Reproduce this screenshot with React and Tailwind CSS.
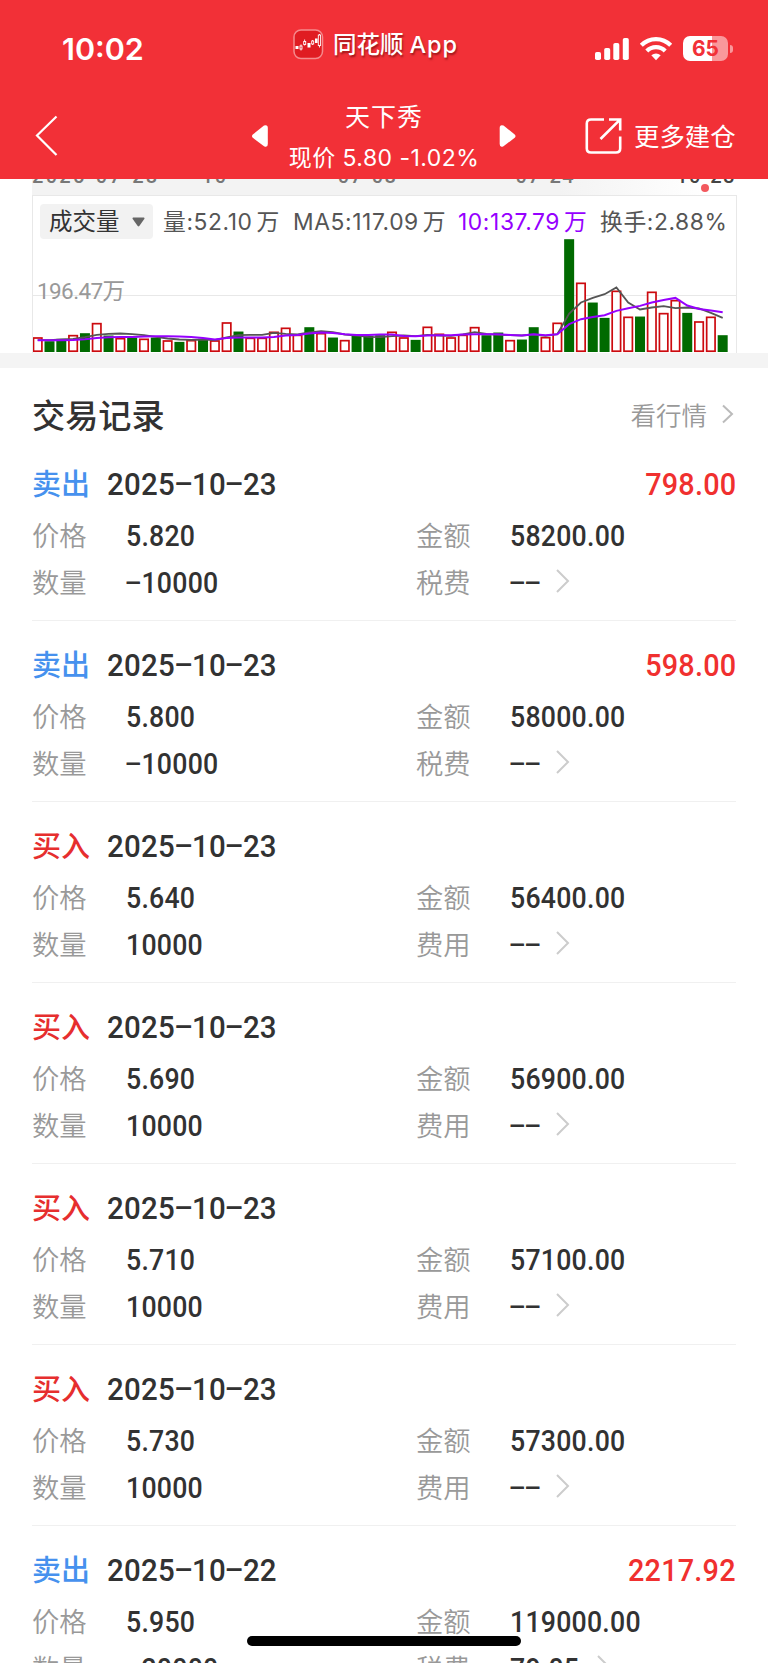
import React from "react";

const CJK = "font-['Noto_Sans_CJK_SC',sans-serif]";
const MIX = "font-['Inter','Noto_Sans_CJK_SC',sans-serif]";

const RED = "#cc0a0f";
const GREEN = "#006a00";

// [direction, top edge of the bar inside the volume pane, in thirds of a pixel]
const VOLUMES = [
  ["r", 516], ["g", 528], ["g", 521], ["r", 509], ["g", 504], ["r", 473], ["g", 511], ["r", 518], ["g", 517], ["r", 520],
  ["g", 517], ["r", 525], ["g", 530], ["r", 524], ["g", 521], ["r", 525], ["r", 471], ["g", 499], ["r", 517], ["r", 517],
  ["r", 499], ["r", 487], ["r", 508], ["g", 486], ["r", 503], ["g", 517], ["r", 524], ["g", 512], ["g", 512], ["g", 510],
  ["r", 499], ["r", 516], ["g", 524], ["r", 484], ["r", 505], ["r", 516], ["r", 508], ["r", 485], ["g", 510], ["g", 502],
  ["r", 524], ["g", 523], ["g", 486], ["r", 515], ["r", 472], ["g", 222], ["r", 352], ["g", 412], ["g", 458], ["r", 376],
  ["r", 454], ["g", 454], ["r", 379], ["r", 443], ["r", 404], ["g", 443], ["r", 468], ["r", 454], ["g", 510],
];

const MA5 = [
  525, 525, 523, 521, 516, 509, 506, 505, 507, 510, 515, 520, 523, 524, 523, 525, 517, 510, 509, 509,
  503, 506, 508, 502, 498, 501, 508, 511, 515, 516, 513, 511, 513, 509, 511, 512, 508, 501, 506, 509,
  510, 511, 508, 512, 507, 445, 412, 398, 387, 367, 412, 433, 427, 423, 429, 427, 430, 443, 458,
];

const MA10 = [
  525, 525, 525, 524, 522, 518, 516, 515, 515, 514, 513, 513, 514, 515, 518, 523, 518, 517, 517, 517,
  515, 511, 509, 505, 502, 503, 507, 509, 509, 508, 508, 512, 513, 511, 510, 510, 508, 507, 507, 507,
  509, 511, 507, 510, 507, 477, 462, 455, 450, 437, 429, 422, 412, 404, 398, 421, 431, 436, 441,
];

const xAt = (i) => 4.7 + i * 11.81;
const yAt = (v) => v / 3 - 30.8;
const toPoints = (arr) => arr.map((v, i) => `${xAt(i).toFixed(1)},${yAt(v).toFixed(1)}`).join(" ");

const RECORDS = [
  { side: "sell", date: "2025-10-23", profit: "798.00", price: "5.820", amount: "58200.00", qty: "-10000", fee: "--" },
  { side: "sell", date: "2025-10-23", profit: "598.00", price: "5.800", amount: "58000.00", qty: "-10000", fee: "--" },
  { side: "buy", date: "2025-10-23", price: "5.640", amount: "56400.00", qty: "10000", fee: "--" },
  { side: "buy", date: "2025-10-23", price: "5.690", amount: "56900.00", qty: "10000", fee: "--" },
  { side: "buy", date: "2025-10-23", price: "5.710", amount: "57100.00", qty: "10000", fee: "--" },
  { side: "buy", date: "2025-10-23", price: "5.730", amount: "57300.00", qty: "10000", fee: "--" },
  { side: "sell", date: "2025-10-22", profit: "2217.92", price: "5.950", amount: "119000.00", qty: "-20000", fee: "79.05" },
];

// Condensed digits; hyphens are stretched to the width of a digit.
function Num({ children, right }) {
  return (
    <span className={`inline-block whitespace-pre tracking-[0.250px] ${right ? "scale-x-[0.9] origin-right" : "scale-x-[0.92] origin-left"}`}>
      {children.split("").map((c, i) =>
        c === "-" ? (
          <span key={i} className="inline-block w-[0.58em] text-center tracking-normal">
            <span className="inline-block origin-center -translate-y-px scale-x-[1.950] scale-y-90">-</span>
          </span>
        ) : (
          c
        )
      )}
    </span>
  );
}

function StatusBar() {
  return (
    <div className="flex h-[94px] items-start">
      <div className="ml-[62px] mt-[31px] w-[231px] font-['Inter',sans-serif] text-[30.500px] leading-9 font-semibold">10:02</div>
      <div className="mt-[29px] flex w-[302px] items-center">
        <svg width="31" height="31" viewBox="0 0 31 31">
          <rect x="1" y="1" width="28.5" height="28.5" rx="7" fill="#e01c22" stroke="#f58a8d" strokeWidth="1.5" />
          <g fill="#fff">
            <rect x="2.5" y="17" width="3" height="3" />
            <rect x="14.5" y="14" width="3" height="4.5" />
            <rect x="22" y="9.5" width="2.6" height="4.5" />
          </g>
          <g fill="none" stroke="#fff" strokeWidth="0.9">
            <path d="M8 15.5v6M11.600 10.500v6M19.600 11v5M26.500 5v13.500" />
            <rect x="7" y="17" width="2" height="3" fill="#e01c22" />
            <rect x="10.700" y="12.500" width="2" height="3" fill="#e01c22" />
            <rect x="18.700" y="12" width="2" height="3" fill="#e01c22" />
            <rect x="25.300" y="6" width="2.300" height="10.500" fill="#e01c22" />
          </g>
        </svg>
        <span className={`${MIX} ml-[9px] text-[23.5px] leading-[31px] font-medium [text-shadow:1px_2px_2px_rgba(90,0,0,0.55)]`}>
          同花顺<span className="ml-[6px] tracking-[0.900px]">App</span>
        </span>
      </div>
      <div className="mt-[36px] flex items-start">
        <svg className="mt-[1px]" width="36" height="24" viewBox="0 0 36 24" fill="#fff">
          <rect x="0" y="15" width="6" height="8" rx="1.8" />
          <rect x="9.200" y="11" width="6" height="12" rx="1.8" />
          <rect x="18.300" y="6" width="6" height="17" rx="1.8" />
          <rect x="27.800" y="1" width="6" height="22" rx="1.8" />
        </svg>
        <svg className="ml-[8px]" width="34" height="25" viewBox="0 0 34 25" fill="none" stroke="#fff" strokeWidth="4.200">
          <path d="M2.300 9.300A20.500 20.500 0 0 1 31.700 9.300" />
          <path d="M7.800 15A12.800 12.800 0 0 1 26.200 15" />
          <path d="M17 24.300L12.300 19.200Q17 15.600 21.700 19.200Z" fill="#fff" stroke="none" />
        </svg>
        <div className="ml-[10px] flex items-center">
          <div className="flex h-[25px] w-[45px] items-center justify-center rounded-[7px] bg-[linear-gradient(to_right,#fff_65%,#f9989b_65%)] font-['Inter',sans-serif] text-[21px] leading-none font-bold text-[#f23037]">65</div>
          <div className="ml-[1.500px] h-[8px] w-[3px] rounded-r-full bg-[#f9989b]" />
        </div>
      </div>
    </div>
  );
}

function NavBar() {
  return (
    <div className="flex h-[85px] items-start">
      <svg className="ml-[35px] mt-[21px]" width="24" height="42" viewBox="0 0 24 42" fill="none" stroke="#fff" strokeWidth="2.200">
        <path d="M21.500 1.500L2 20.500L21.500 40" />
      </svg>
      <svg className="ml-[192px] mt-[30px]" width="18" height="24" viewBox="0 0 18 24" fill="#fff">
        <path d="M1.800 10.500L13 1.500Q16.800 0.200 16.800 4V20Q16.800 24 13 22.300L1.800 13.800Q0.200 12.200 1.800 10.500Z" />
      </svg>
      <div className={`${MIX} flex w-[230px] flex-col items-center`}>
        <div className="mt-[7px] text-[25px] leading-8 tracking-[1px]">天下秀</div>
        <div className="mt-[9px] text-[23px] leading-8 tracking-[0.450px] whitespace-nowrap">现价 5.80 -1.02%</div>
      </div>
      <svg className="mt-[30px]" width="18" height="24" viewBox="0 0 18 24" fill="#fff">
        <path d="M15.700 10.500L4.500 1.500Q0.700 0.200 0.700 4V20Q0.700 24 4.500 22.300L15.700 13.800Q17.300 12.200 15.700 10.500Z" />
      </svg>
      <svg className="ml-[67px] mt-[23px]" width="40" height="38" viewBox="0 0 40 38" fill="none" stroke="#fff" strokeWidth="2.600">
        <path d="M20 2.500H7Q2.800 2.500 2.800 6.500V31.500Q2.800 35.500 7 35.500H32Q36.200 35.500 36.200 31.500V19.500" />
        <path d="M25 2.500H36.200V13.500M36 2.700L16.500 22" />
      </svg>
      <span className={`${CJK} ml-[10px] mt-[23px] text-[25.400px] leading-9 whitespace-nowrap`}>更多建仓</span>
    </div>
  );
}

function VolumeChart() {
  return (
    <div className="h-[174px] shrink-0 px-8">
      <div className="flex h-[16px] w-[704px] overflow-hidden bg-[linear-gradient(to_right,#f3f3f3_75%,#ffffff_96%)] font-['Roboto',sans-serif] text-[20px] leading-[24px] font-medium text-[#777]">
        <div className="-mt-[15px] flex w-[704px] shrink-0 whitespace-pre tracking-[1.500px]">
          <span className="w-[134px] tracking-[2.300px]">2025-07-28</span>
          <span className="w-[172px] pl-[36px]">10</span>
          <span className="w-[178px]">07-08</span>
          <span className="w-[161px]">07-24</span>
          <span className="text-[#444]">10-23</span>
        </div>
      </div>
      <div className="relative h-[158px] w-[705px] border border-b-0 border-[#e8e8e8]">
        <svg className="absolute top-0 left-0" width="704" height="157" viewBox="0 0 704 157">
          <path d="M0 99.500H704" stroke="#e8e8e8" strokeWidth="1" />
          {VOLUMES.map(([d, v], i) => {
            const y = yAt(v);
            return d === "g" ? (
              <rect key={i} x={xAt(i) - 5} y={y} width="10" height={156 - y} fill={GREEN} />
            ) : (
              <rect key={i} x={xAt(i) - 4.2} y={y + 0.8} width="8.4" height={154.4 - y} fill="#fff" stroke={RED} strokeWidth="1.7" />
            );
          })}
          <polyline points={toPoints(MA5)} fill="none" stroke="#555" strokeWidth="1.8" />
          <polyline points={toPoints(MA10)} fill="none" stroke="#9600ff" strokeWidth="2" />
        </svg>
        <div className={`${MIX} relative flex items-center pt-[8px] pl-[7px] text-[22.800px] leading-[35px] tracking-[0.600px] text-[#555] whitespace-nowrap`}>
          <div className="flex h-[35px] w-[113px] items-center rounded-[4px] bg-[#f2f2f2] pl-[9px] text-[23.500px] tracking-normal text-[#333]">
            成交量
            <svg className="ml-[12px]" width="13" height="10" viewBox="0 0 13 10" fill="#666">
              <path d="M1 0.500H12Q13 1 12.300 2L7.300 9Q6.500 9.800 5.700 9L0.700 2Q0 1 1 0.500Z" />
            </svg>
          </div>
          <span className="ml-[10px] w-[130px]">量:52.10<span className="ml-[4px]">万</span></span>
          <span className="w-[165px]">MA5:117.09<span className="ml-[4px]">万</span></span>
          <span className="w-[142px] text-[#9600ff]">10:137.79<span className="ml-[4px]">万</span></span>
          <span>换手:2.88%</span>
        </div>
        <div className="relative mt-[36px] ml-[4px] font-['Roboto','Noto_Sans_CJK_SC',sans-serif] text-[22.500px] leading-8 tracking-[-0.600px] text-[#999]">196.47万</div>
        <div className="absolute -top-[12px] left-[668px] size-[8px] rounded-full bg-[#f3595e]" />
      </div>
    </div>
  );
}

function Chevron() {
  return (
    <svg className="ml-[12px] -mt-[3px]" width="14" height="24" viewBox="0 0 14 24" fill="none" stroke="#ccc" strokeWidth="2">
      <path d="M1 1L12 12L1 23" />
    </svg>
  );
}

function Field({ label, value, chevron, wide }) {
  return (
    <div className={wide ? "flex w-[384px] items-center" : "flex w-[320px] items-center"}>
      <span className={`${CJK} w-[94px] text-[27.300px] leading-[44px] font-[350] text-[#999] pb-[2px]`}>{label}</span>
      <span className="pt-[2px] font-['Roboto',sans-serif] text-[29px] leading-[44px] font-medium text-[#323232]">
        <Num>{value}</Num>
      </span>
      {chevron && <Chevron />}
    </div>
  );
}

function Record({ r }) {
  const sell = r.side === "sell";
  return (
    <div className="mx-8 h-[181px] shrink-0 border-b border-[#f0f0f0] pt-[25px]">
      <div className="flex h-9 items-center font-['Roboto',sans-serif] text-[32px] font-medium">
        <span className={`${CJK} w-[75px] text-[29px] ${sell ? "text-[#4691ee]" : "text-[#e62e2e]"}`}>
          {sell ? "卖出" : "买入"}
        </span>
        <span className="flex-1 pt-[2px] text-[#323232]"><Num>{r.date}</Num></span>
        {r.profit && <span className="pt-[2px] text-[#f0302f]"><Num right>{r.profit}</Num></span>}
      </div>
      <div className="mt-[11px] flex h-[46px]">
        <Field label="价格" value={r.price} wide />
        <Field label="金额" value={r.amount} />
      </div>
      <div className="mt-[1px] flex h-[46px]">
        <Field label="数量" value={r.qty} wide />
        <Field label={sell ? "税费" : "费用"} value={r.fee} chevron />
      </div>
    </div>
  );
}

export default function App() {
  return (
    <div className="relative flex h-[1663px] w-[768px] flex-col overflow-hidden bg-white">
      <header className="h-[179px] shrink-0 bg-[#f23037] text-white">
        <StatusBar />
        <NavBar />
      </header>
      <VolumeChart />
      <div className="h-[15px] shrink-0 bg-[#f4f4f4]" />
      <div className="flex h-[72px] shrink-0 items-center px-8 pt-[19px]">
        <h1 className={`${CJK} flex-1 text-[33.200px] leading-[48px] font-medium text-[#323232]`}>交易记录</h1>
        <span className={`${CJK} text-[25.500px] leading-[48px] font-[350] text-[#999]`}>看行情</span>
        <svg className="mr-[2px] ml-[15px]" width="12" height="20" viewBox="0 0 12 20" fill="none" stroke="#bbb" strokeWidth="2">
          <path d="M1 1.500L10 10L1 18.500" />
        </svg>
      </div>
      {RECORDS.map((r, i) => (
        <Record key={i} r={r} />
      ))}
      <div className="absolute top-[1636px] left-[247px] h-[10px] w-[274px] rounded-full bg-black" />
    </div>
  );
}
